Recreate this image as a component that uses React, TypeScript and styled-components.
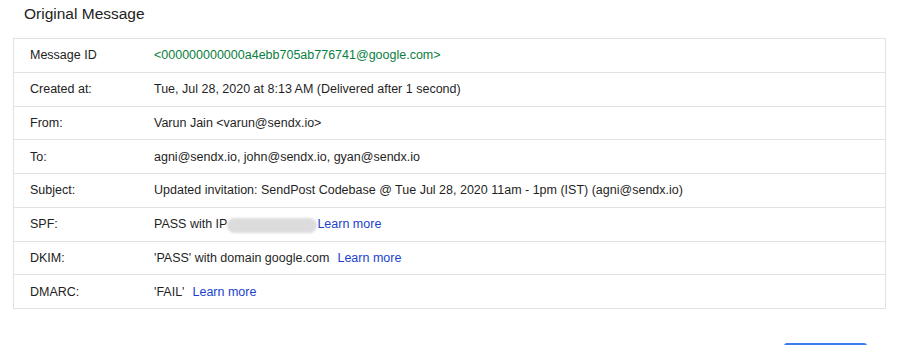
import React from 'react';
import styled, { createGlobalStyle } from 'styled-components';

const linkBlue = '#1c3fcf';
const lineGrey = '#e2e2e2';

const GlobalStyle = createGlobalStyle`
  html, body {
    margin: 0;
    padding: 0;
    background: #ffffff;
  }
  body {
    font-family: 'Liberation Sans', Arial, sans-serif;
    color: #222222;
  }
`;

const Page = styled.div`
  width: 900px;
  height: 345px;
  overflow: hidden;
  box-sizing: border-box;
  padding: 4px 14px 0 13px;
  display: flex;
  flex-direction: column;

  & > * {
    flex-shrink: 0;
  }
`;

const Heading = styled.h2`
  margin: 0 0 0 11px;
  height: 34px;
  font-size: 15.5px;
  font-weight: normal;
  line-height: 20px;
  color: #222222;
`;

const Table = styled.div`
  width: 873px;
  border: 1px solid ${lineGrey};
  box-sizing: border-box;
`;

const Row = styled.div`
  display: grid;
  grid-template-columns: 124px 1fr;
  align-items: center;
  height: 33.75px;
  padding-left: 16px;
  box-sizing: border-box;
  font-size: 12.5px;
  border-top: 1px solid ${lineGrey};

  &:first-child {
    border-top: none;
    height: 32.75px;
  }
`;

const Label = styled.div`
  color: #222222;
`;

const Value = styled.div<{ $green?: boolean }>`
  display: flex;
  align-items: center;
  white-space: nowrap;
  color: ${(p) => (p.$green ? '#0a8040' : '#1f1f1f')};
`;

const LearnMore = styled.a<{ $gap?: number }>`
  color: ${linkBlue};
  text-decoration: none;
  margin-left: ${(p) => p.$gap ?? 0}px;
  cursor: pointer;
`;

// redacted IP address, drawn as a soft grey smear
const Redacted = styled.span`
  display: inline-block;
  width: 90px;
  height: 15px;
  margin-top: 2px;
  border-radius: 8px;
  background: #dcdcdc;
  filter: blur(1.2px);
`;

const Footer = styled.div`
  display: flex;
  justify-content: flex-end;
  padding: 34px 19px 0 0;
`;

const PrimaryButton = styled.button`
  width: 83px;
  height: 30px;
  border: none;
  border-radius: 3px;
  background: #3b7bf0;
`;

type Entry = {
  label: string;
  value: React.ReactNode;
  green?: boolean;
};

const entries: Entry[] = [
  {
    label: 'Message ID',
    value: '<000000000000a4ebb705ab776741@google.com>',
    green: true,
  },
  {
    label: 'Created at:',
    value: 'Tue, Jul 28, 2020 at 8:13 AM (Delivered after 1 second)',
  },
  { label: 'From:', value: 'Varun Jain <varun@sendx.io>' },
  { label: 'To:', value: 'agni@sendx.io, john@sendx.io, gyan@sendx.io' },
  {
    label: 'Subject:',
    value:
      'Updated invitation: SendPost Codebase @ Tue Jul 28, 2020 11am - 1pm (IST) (agni@sendx.io)',
  },
  {
    label: 'SPF:',
    value: (
      <>
        PASS with IP <Redacted />
        <LearnMore>Learn more</LearnMore>
      </>
    ),
  },
  {
    label: 'DKIM:',
    value: (
      <>
        'PASS' with domain google.com
        <LearnMore $gap={8}>Learn more</LearnMore>
      </>
    ),
  },
  {
    label: 'DMARC:',
    value: (
      <>
        'FAIL'
        <LearnMore $gap={8}>Learn more</LearnMore>
      </>
    ),
  },
];

export default function App() {
  return (
    <>
      <GlobalStyle />
      <Page>
        <Heading>Original Message</Heading>
        <Table>
          {entries.map((e) => (
            <Row key={e.label}>
              <Label>{e.label}</Label>
              <Value $green={e.green}>{e.value}</Value>
            </Row>
          ))}
        </Table>
        <Footer>
          <PrimaryButton />
        </Footer>
      </Page>
    </>
  );
}
